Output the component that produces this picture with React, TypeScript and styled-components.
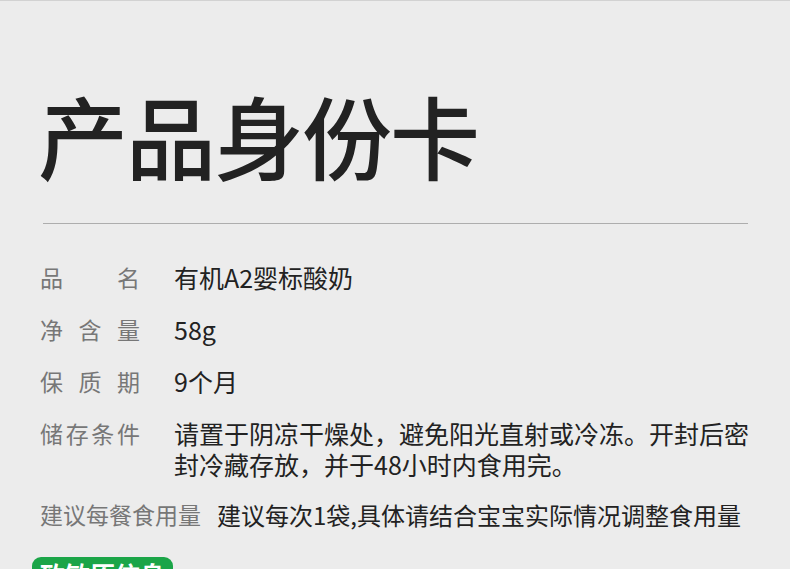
import React from "react";
import styled, { createGlobalStyle } from "styled-components";

const GlobalStyle = createGlobalStyle`
  html, body {
    margin: 0;
    padding: 0;
    background: #ececec;
  }
  body {
    font-family: "Noto Sans CJK SC", "Noto Sans", sans-serif;
  }
`;

const Page = styled.div`
  width: 790px;
  height: 569px;
  overflow: hidden;
  box-sizing: border-box;
  border-top: 1px solid #d2d2d2;
  background: #ececec;
  padding: 0 0 0 40px;
`;

const Title = styled.h1`
  margin: 79px 0 0 -2px;
  font-size: 90px;
  line-height: 108px;
  font-weight: 500;
  color: #222;
  letter-spacing: -2px;
`;

const Divider = styled.div`
  margin: 35px 0 0 3px;
  width: 705px;
  height: 1px;
  background: #adadad;
`;

const List = styled.div`
  display: flex;
  flex-direction: column;
  margin-top: 38px;
`;

const Row = styled.div<{ $wide?: boolean; $space?: number }>`
  display: flex;
  align-items: flex-start;
  gap: ${(p) => (p.$wide ? "16px" : "34px")};
  margin-bottom: ${(p) => p.$space ?? 21}px;
`;

const Label = styled.div<{ $wide?: boolean }>`
  flex: none;
  width: ${(p) => (p.$wide ? "auto" : "100px")};
  font-size: 23px;
  line-height: 31px;
  color: #777;
  text-align: justify;
  text-align-last: ${(p) => (p.$wide ? "auto" : "justify")};
  white-space: nowrap;
`;

const Value = styled.div`
  flex: none;
  width: 582px;
  font-size: 25px;
  line-height: 31px;
  color: #222;
`;

const WideValue = styled(Value)`
  width: auto;
  font-size: 24px;
  white-space: nowrap;
`;

const Tag = styled.div`
  display: inline-block;
  margin: 6px 0 0 -8px;
  padding: 0 8px;
  border-radius: 9px;
  background: #1ba548;
  color: #fff;
  font-size: 25px;
  font-weight: 700;
  line-height: 34px;
`;

const rows = [
  { label: "品名", value: "有机A2婴标酸奶" },
  { label: "净含量", value: "58g" },
  { label: "保质期", value: "9个月" },
  {
    label: "储存条件",
    value: "请置于阴凉干燥处，避免阳光直射或冷冻。开封后密封冷藏存放，并于48小时内食用完。",
  },
];

export default function App() {
  return (
    <>
      <GlobalStyle />
      <Page>
        <Title>产品身份卡</Title>
        <Divider />
        <List>
          {rows.map((r, i) => (
            <Row key={r.label} $space={i === 3 ? 19 : 21}>
              <Label>{r.label}</Label>
              <Value>{r.value}</Value>
            </Row>
          ))}
          <Row $wide>
            <Label $wide>建议每餐食用量</Label>
            <WideValue>建议每次1袋,具体请结合宝宝实际情况调整食用量</WideValue>
          </Row>
        </List>
        <Tag>致敏原信息</Tag>
      </Page>
    </>
  );
}
